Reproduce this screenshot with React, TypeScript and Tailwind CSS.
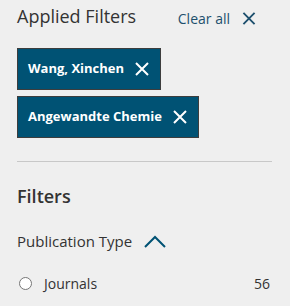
import React from "react";

const XIcon = ({ className }: { className?: string }) => (
  <svg viewBox="0 0 14 14" className={className} fill="none" stroke="currentColor" strokeWidth="2" strokeLinecap="butt">
    <path d="M1 1 L13 13 M13 1 L1 13" />
  </svg>
);

const Chip = ({ label }: { label: string }) => (
  <div className="inline-flex h-[42px] items-center gap-[11px] self-start border border-[#3d3d3d] bg-[#005274] pl-[10px] pr-[11px] text-[13px] font-bold text-white">
    <span>{label}</span>
    <XIcon className="h-[14px] w-[14px]" />
  </div>
);

export default function App() {
  return (
    <div
      className="h-[306px] w-[290px] overflow-hidden bg-[#efefef] pl-[17px] pr-[18px] text-[#333333]"
      style={{ fontFamily: '"Open Sans", "Noto Sans", sans-serif' }}
    >
      <div className="flex items-center pt-[3px]">
        <h2 className="text-[18px] leading-[26px] font-normal text-[#333333]">Applied Filters</h2>
        <button className="ml-auto mr-[16px] flex items-center gap-[12px] pt-[5px] text-[14px] text-[#1d4f6d]">
          <span>Clear all</span>
          <XIcon className="h-[13px] w-[14px]" />
        </button>
      </div>
      <div className="mt-[19px] flex flex-col gap-[6px]">
        <Chip label="Wang, Xinchen" />
        <Chip label="Angewandte Chemie" />
      </div>
      <div className="mt-[23px] h-px w-full bg-[#c8c8c8]" />
      <h2 className="mt-[21px] text-[18px] leading-[26px] font-semibold text-[#333333]">Filters</h2>
      <button className="mt-[21px] flex items-center gap-[12px] text-[15px] text-[#333333]">
        <span>Publication Type</span>
        <svg viewBox="0 0 22 13" className="h-[13px] w-[22px]" fill="none" stroke="#005274" strokeWidth="2">
          <path d="M1 12 L11 2 L21 12" />
        </svg>
      </button>
      <div className="mt-[20px] flex items-center text-[14px]">
        <span className="ml-[2px] h-[13px] w-[13px] rounded-full border border-[#767676] bg-white" />
        <span className="ml-[12px]">Journals</span>
        <span className="ml-auto mr-[2px]">56</span>
      </div>
    </div>
  );
}
